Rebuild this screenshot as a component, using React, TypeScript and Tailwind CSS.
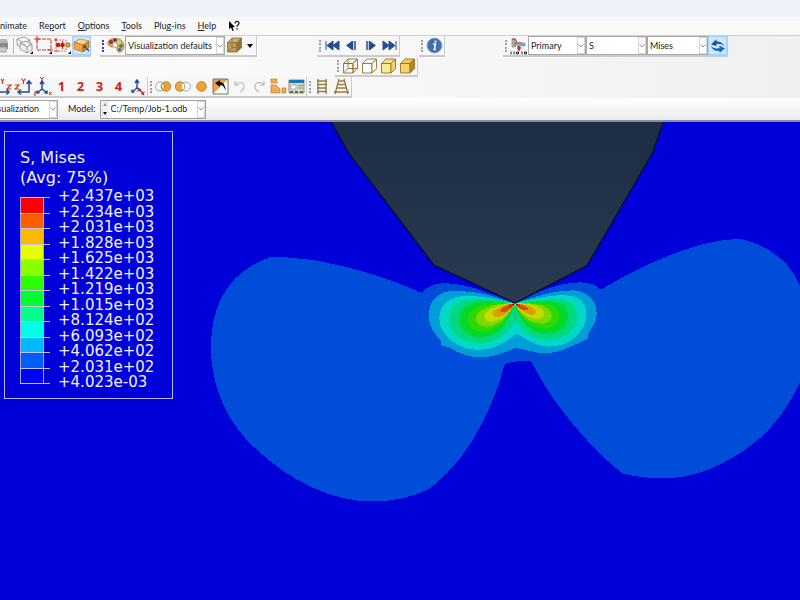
import type { ReactNode } from "react";

const legend = [
  { value: "+2.437e+03", color: "bg-[#ff0000]" },
  { value: "+2.234e+03", color: "bg-[#ff5d00]" },
  { value: "+2.031e+03", color: "bg-[#ffb900]" },
  { value: "+1.828e+03", color: "bg-[#e7ff00]" },
  { value: "+1.625e+03", color: "bg-[#8bff00]" },
  { value: "+1.422e+03", color: "bg-[#2eff00]" },
  { value: "+1.219e+03", color: "bg-[#00ff2e]" },
  { value: "+1.015e+03", color: "bg-[#00ff8b]" },
  { value: "+8.124e+02", color: "bg-[#00ffe7]" },
  { value: "+6.093e+02", color: "bg-[#00b9ff]" },
  { value: "+4.062e+02", color: "bg-[#005dff]" },
  { value: "+2.031e+02", color: "bg-[#0000ff]" },
  { value: "+4.023e-03", color: "" },
];

const menus = [
  ["", "A", "nimate"],
  ["Re", "p", "ort"],
  ["", "O", "ptions"],
  ["", "T", "ools"],
  ["Plu", "g", "-ins"],
  ["", "H", "elp"],
];

function Icon({ children }: { children: ReactNode }) {
  return (
    <svg viewBox="0 0 19 19" className="block size-[19px]" fill="none" aria-hidden="true">
      {children}
    </svg>
  );
}

function Tool({ label, active, children }: { label: string; active?: boolean; children: ReactNode }) {
  return (
    <button
      aria-label={label}
      className={
        active
          ? "h-[19px] w-[19px] shrink-0 bg-[#cce8ff] outline outline-[#99d1ff] -outline-offset-1"
          : "h-[19px] w-[19px] shrink-0 hover:bg-[#e5f3ff]"
      }
    >
      <Icon>{children}</Icon>
    </button>
  );
}

function Grip({ color = "border-[#a0a0a0]" }: { color?: string }) {
  return <span className={`mx-[2px] h-3 shrink-0 border-l-2 border-dotted ${color}`} />;
}

function Group({ className = "", children }: { className?: string; children: ReactNode }) {
  return (
    <div className={`flex h-full shrink-0 items-center border-r border-b-2 border-[#cbcbcb] bg-[#f7f7f7] ${className}`}>
      {children}
    </div>
  );
}

function Chevron() {
  return (
    <span className="pointer-events-none absolute inset-y-0 right-0 flex w-2 items-center justify-center border border-[#d4d4d4] bg-white">
      <svg viewBox="0 0 6 4" className="w-[6px]" fill="none" stroke="#777" strokeWidth=".8">
        <path d="M.5.5 3 3 5.5.5" />
      </svg>
    </span>
  );
}

function Dropdown({ label, value, className }: { label: string; value: string; className: string }) {
  return (
    <div className={`relative h-[19px] shrink-0 border border-[#a8a8a8] bg-white ${className}`}>
      <select aria-label={label} className="block h-full w-full appearance-none bg-transparent pl-[2px] outline-none">
        <option>{value}</option>
      </select>
      <Chevron />
    </div>
  );
}

function Cube({ face, top, side, wire }: { face: string; top: string; side: string; wire?: boolean }) {
  return (
    <g stroke="#94702f" strokeWidth=".9" strokeLinejoin="round">
      <path d="M2.500 6.500h9.500v9.500h-9.500z" fill={face} />
      <path d="m2.500 6.500 4.500-4.500h9.500L12 6.500z" fill={top} />
      <path d="m12 6.500 4.500-4.500v9.500L12 16z" fill={side} />
      {wire && <path d="M7 2v9.500h9.500M7 11.500 2.500 16" />}
    </g>
  );
}

function Digit({ value }: { value: string }) {
  return (
    <button className="h-[19px] w-[19px] shrink-0 text-center font-['Open_Sans',sans-serif] text-[13px] leading-[19px] font-bold text-[#cc2412]">
      {value}
    </button>
  );
}

function MenuBar() {
  return (
    <nav className="-ml-2 flex h-[18px] items-center gap-3 bg-[#f9f9f9] pl-[2px]">
      {menus.map(([before, key, after]) => (
        <button key={after} className="shrink-0">
          {before}
          <span className="underline underline-offset-1">{key}</span>
          {after}
        </button>
      ))}
      <button aria-label="Context help" className="shrink-0">
        <svg viewBox="0 0 12 12" className="block size-3">
          <path d="M1 1v8l2-1.600L4.500 11l1.300-.6L4.500 7.200 7 7z" fill="#000" />
          <path d="M7 3.500c0-3 4-2.700 4-.3C11 4.800 9 4.700 9 6.800M9 8v1.500" fill="none" stroke="#222" strokeWidth="1.300" />
        </svg>
      </button>
    </nav>
  );
}

function Toolbars() {
  return (
    <div className="border-t border-[#cfcfcf] bg-linear-to-r from-[#fbfbfb] via-[#f7f7f7] to-[#f0f0f0]">
      <div className="flex h-[21px]">
        <Group className="-ml-[6px] border-r-0">
          <Tool label="Print">
            <path d="M4 3h9l1 4H4z" fill="#b5b5b5" />
            <path d="M1 7h13v6H1z" fill="#898989" />
            <path d="M5 11h8l-1 5H5z" fill="#c9c9c9" stroke="#8c8c8c" strokeWidth=".7" />
          </Tool>
          <span className="h-4 w-[2px] border-l border-[#bdbdbd]" />
          <Tool label="Pan view">
            <g stroke="#8b8b8b" strokeWidth=".8" strokeLinejoin="round">
              <path d="m2 3 7-2 6 3v6l-5 3-8-4zM2 3l7 4 6-3M9 7v6" />
              <path d="m5 7 6-2 6 3v6l-5 3-7-4zM5 7l7 4 5-3m-5 3v6" fill="#eee" />
            </g>
            <path d="M18 15v3h-3z" fill="#111" />
          </Tool>
          <Tool label="Box zoom">
            <path d="M3 3h14v11H3z" stroke="#ce3a2d" strokeWidth="1" strokeDasharray="4 1" />
            <path d="M3 0v6M0 3h6m8 11h5" stroke="#ce3a2d" strokeWidth="1.200" />
            <path d="M18 15v3h-3z" fill="#111" />
          </Tool>
          <Tool label="Select entities">
            <path d="M3 4h10v11H3z" stroke="#d0564a" strokeWidth=".8" strokeDasharray="2 1" />
            <path d="M3 2v3M1 4h3M1 15h4" stroke="#ce3a2d" strokeWidth="1.200" />
            <circle cx="5" cy="9" r="2.300" fill="#c11d12" />
            <circle cx="9.500" cy="9" r="2.300" fill="#c11d12" />
            <path d="M9.500 5v8" stroke="#c11d12" />
            <circle cx="15" cy="9" r="2.300" fill="#dca03a" stroke="#7d5a1c" strokeWidth=".6" />
            <path d="M18 15v3h-3z" fill="#111" />
          </Tool>
          <Tool label="Perspective" active>
            <path d="m2 6 6-3 9 2-6 4z" fill="#ffd38a" stroke="#a96c1b" strokeWidth=".6" />
            <path d="m2 6 9 3v7l-9-3z" fill="#f0a341" stroke="#a96c1b" strokeWidth=".6" />
            <path d="m11 9 6-4v7l-6 4z" fill="#d88f30" stroke="#955c13" strokeWidth=".6" />
            <path d="m12 10 5 5m-5-5h2m-2 0v2" stroke="#294f90" strokeWidth="1.400" />
          </Tool>
        </Group>
        <Group className="ml-[9px]">
          <Grip color="border-[#3b3bd8]" />
          <Tool label="Color code">
            <path d="M2 6C3 2 11 1 15 4c4 3 4 9 0 12-3 1-4-1-4-3s-3-2-5-2-5-2-4-5z" fill="#cfa878" stroke="#8c6b43" strokeWidth=".6" />
            <circle cx="5" cy="6" r="2" fill="#c51e1e" />
            <circle cx="9" cy="4" r="1.600" fill="#1c2c66" />
            <circle cx="13" cy="6" r="1.900" fill="#e8d64a" />
            <circle cx="15" cy="10" r="1.800" fill="#2c8a3c" />
            <circle cx="9" cy="9" r="2" fill="#fff" />
            <circle cx="13.500" cy="13.500" r="1.500" fill="#3a62b8" />
          </Tool>
          <Dropdown label="Color mapping" value="Visualization defaults" className="w-[100px]" />
          <Tool label="Translucency">
            <Cube face="#b79a63" top="#cbb27f" side="#94743c" wire />
          </Tool>
          <button aria-label="Translucency options" className="flex h-4 w-3 items-center justify-center">
            <svg viewBox="0 0 6 4" className="w-[6px]">
              <path d="M0 0h6L3 4z" fill="#000" />
            </svg>
          </button>
        </Group>
        <Group className="ml-[60px]">
          <Grip />
          <Tool label="First frame">
            <path d="M3 5v9M4 9.500l6-4.500v9zM10 9.500l6-4.500v9z" fill="#234f8e" stroke="#234f8e" strokeWidth="1" />
          </Tool>
          <Tool label="Previous frame">
            <path d="m4 9.500 6-4.500v9z" fill="#234f8e" />
            <path d="M10.500 5v9m2.500-9v9" stroke="#234f8e" strokeWidth="1.500" />
          </Tool>
          <Tool label="Next frame">
            <path d="m15 9.500-6-4.500v9z" fill="#234f8e" />
            <path d="M6 5v9m2.500-9v9" stroke="#234f8e" strokeWidth="1.500" />
          </Tool>
          <Tool label="Last frame">
            <path d="M16 5v9M15 9.500 9 5v9zM9 9.500 3 5v9z" fill="#234f8e" stroke="#234f8e" strokeWidth="1" />
          </Tool>
        </Group>
        <Group className="ml-[19px]">
          <Grip />
          <Tool label="Query information">
            <circle cx="9.500" cy="9.500" r="7.400" fill="#426fb4" stroke="#8c9fc0" strokeWidth="1" />
            <path d="M8 8h2.500l-1.200 5.500h1.700" stroke="#fff" strokeWidth="1.500" />
            <circle cx="10.500" cy="5.500" r="1.100" fill="#fff" />
          </Tool>
        </Group>
        <Group className="ml-[58px]">
          <Grip />
          <Tool label="Field output">
            <path d="M3 3h3v8H3zM6 7h10v3H6z" fill="#a8b8b4" stroke="#777" strokeWidth=".6" />
            <path d="M3 3h3l2 3M6 7h7" stroke="#c9322e" strokeWidth="1.200" />
            <path d="M11 7h5v2h-5z" fill="#65a7d7" />
            <path d="M10 10v5M8 12h4" stroke="#a92b22" strokeWidth="1.600" />
            <path d="M2 15.500v3M5 15.500v3m8-3v3M7.500 16h2v2h-2zM15.500 16h2v2h-2z" stroke="#222" />
          </Tool>
          <Dropdown label="Variable position" value="Primary" className="w-[58px]" />
          <Dropdown label="Output variable" value="S" className="w-[61px]" />
          <Dropdown label="Invariant" value="Mises" className="w-[61px]" />
          <Tool label="Sync" active>
            <path d="M3 8.500 8.500 3v2.500c4 0 6.500 1.500 7.500 4.500-2-2-4.500-2.500-7.500-2V10z" fill="#28489f" />
            <path d="M17 12.500 11.500 17v-2C7 15.500 4 13.500 3 10c2 2 5 3 8.500 2V9.500z" fill="#1b68bd" />
          </Tool>
        </Group>
      </div>
      <div className="flex h-5 pl-[335px]">
        <Group>
          <Grip />
          <Tool label="Wireframe">
            <Cube face="none" top="none" side="none" wire />
          </Tool>
          <Tool label="Hidden line">
            <Cube face="#fbfbfb" top="#fbfbfb" side="#fbfbfb" />
          </Tool>
          <Tool label="Filled">
            <Cube face="#fbeb94" top="#f7e284" side="#efd46d" />
          </Tool>
          <Tool label="Shaded">
            <Cube face="#f8d562" top="#f4c752" side="#bd8420" />
          </Tool>
        </Group>
      </div>
      <div className="flex h-[21px]">
        <Group className="-ml-[5px]">
          <Tool label="Y-Z view">
            <path d="M4 15h10m-2.500-2.500L14 15l-2.500 2.500" stroke="#23499c" strokeWidth="1.500" />
            <path d="m6 2 1.500 2L9 2M7.500 4v3M12 8h4l-4 4h4" stroke="#cc3322" strokeWidth="1.200" />
          </Tool>
          <Tool label="Z-Y view">
            <path d="M4 15h11V4m-2.500 3L15 4l2.500 3M7 12.500 4 15l3 2.500" stroke="#23499c" strokeWidth="1.500" />
            <path d="M7.500 1.500 9.500 4l2-2.500M9.500 4v3M1 8h4l-4 4h4" stroke="#cc3322" strokeWidth="1.200" />
          </Tool>
          <Tool label="Isometric view">
            <path d="M9 12V5M7 7l2-3 2 3m-2 5-5 4m2.500-.2L4 16l.2-2.500M9 12l5 4m0-2.500V16h-2.500" stroke="#23499c" strokeWidth="1.500" />
            <path d="m7 0 2 2 2-2M9 2v2M1 15h2l-2 3h2m13-3 2.500 3m0-3L16 18" stroke="#cc3322" strokeWidth="1" />
          </Tool>
          <Digit value="1" />
          <Digit value="2" />
          <Digit value="3" />
          <Digit value="4" />
          <Tool label="Rotate view">
            <path d="M9 11V4M7 6l2-3 2 3m-2 5-5 4m0-2.500V15h2.500M9 11l4 2" stroke="#23499c" strokeWidth="1.400" />
            <path d="M9 14c3-1 5 0 6 3m-2-.5 2.500 1 .5-3" stroke="#cc3322" strokeWidth="1.300" />
          </Tool>
        </Group>
        <Group>
          <Grip />
          <Tool label="Replace selected">
            <circle cx="6" cy="9.500" r="4.500" stroke="#a8a8a8" />
            <circle cx="12" cy="9.500" r="4.800" fill="#f0a431" stroke="#9a7133" strokeWidth=".7" />
            <path d="M9 6a4.500 4.500 0 0 1 0 7 4.500 4.500 0 0 1 0-7z" fill="#f8d9a0" stroke="#82672f" strokeWidth=".6" />
          </Tool>
          <Tool label="Remove selected">
            <circle cx="13" cy="9.500" r="4.500" stroke="#a8a8a8" />
            <circle cx="7" cy="9.500" r="4.800" fill="#f0a431" stroke="#9a7133" strokeWidth=".7" />
            <path d="M10 6a4.500 4.500 0 0 1 0 7 4.500 4.500 0 0 1 0-7z" fill="#fff" stroke="#999" strokeWidth=".6" />
          </Tool>
          <Tool label="Display all">
            <circle cx="9.500" cy="9.500" r="4.900" fill="#f0a431" stroke="#ad7a2c" strokeWidth=".8" />
          </Tool>
          <Tool label="Toggle selection">
            <path d="M2 2h15v15H2z" fill="#f8fbfc" />
            <path d="M2 17V2h15z" fill="#e9a43d" />
            <path d="M2 2h15v15H2z" stroke="#777" />
            <path d="m4 6 5-3v2c4 0 5 4 6 9-2-4-3-6-6-6v2z" fill="#080808" />
          </Tool>
          <Tool label="Undo">
            <path d="M5 4v4h4M5 8c3-4 9-3 9 1.500 0 3-2 4.500-4 5.500" stroke="#b5b5b5" strokeWidth="1.100" />
          </Tool>
          <Tool label="Redo">
            <path d="M15 4v4h-4m4 0c-3-4-9-3-9 1.500 0 3 2 4.500 4 5.500" stroke="#b5b5b5" strokeWidth="1.100" />
          </Tool>
          <Tool label="Display groups">
            <g fill="#f0ad4d" stroke="#ad833e" strokeWidth=".7">
              <path d="M3 2h6v4H3zM3 8h5l4 4v4H3zM14 11h4v5h-4z" />
            </g>
          </Tool>
          <Tool label="Group manager">
            <path d="M2 3h15v13H2z" fill="#d9d9c6" stroke="#777760" strokeWidth=".8" />
            <path d="M2 3h15v3H2z" fill="#1878be" />
            <path d="M4 8h5v4H4z" fill="#fff" stroke="#888" strokeWidth=".6" />
            <path d="M11 8.500h5M11 11h5" stroke="#777" strokeWidth=".8" />
            <path d="M3 14h3v2H3zM8 14h3v2H8zM13 14h3v2h-3z" fill="#686849" />
          </Tool>
        </Group>
        <Group>
          <Grip />
          <Tool label="Parallel path">
            <path d="M5 2v15m8-15v15" stroke="#76694f" strokeWidth="1.200" />
            <path d="M4 4h10M4 7.500h10M4 11h10M4 14.500h10" stroke="#a07b3c" strokeWidth="1.300" />
          </Tool>
          <Tool label="Perspective path">
            <path d="m7 2-4 15m9-15 4 15" stroke="#76694f" strokeWidth="1.200" />
            <path d="M6 4h7M5 7.500h9M4 11h11M2 15h15" stroke="#a07b3c" strokeWidth="1.300" />
          </Tool>
        </Group>
      </div>
    </div>
  );
}

function ContextBar() {
  return (
    <div className="flex h-6 items-center border-b-2 border-[#8d8d9c] bg-linear-to-b from-white to-[#ebebeb]">
      <Dropdown label="Module" value="Visualization" className="-ml-[14px] w-[72px]" />
      <label htmlFor="model" className="ml-[10px]">
        Model:
      </label>
      <div className="ml-1 flex h-[19px] border border-[#a0a0a0] bg-[#f0f0f0]">
        <button aria-label="Change output database" className="flex w-2 flex-col items-center justify-around">
          <svg viewBox="0 0 4 3" className="w-1">
            <path d="M2 0 4 3H0z" fill="#999" />
          </svg>
          <svg viewBox="0 0 4 3" className="w-1">
            <path d="M0 0h4L2 3z" fill="#111" />
          </svg>
        </button>
        <div className="relative w-24 bg-white">
          <select id="model" className="block h-full w-full appearance-none bg-transparent pl-[2px] outline-none">
            <option>C:/Temp/Job-1.odb</option>
          </select>
          <Chevron />
        </div>
      </div>
    </div>
  );
}

function StressPlot() {
  return (
    <svg
      viewBox="0 122 800 478"
      preserveAspectRatio="xMidYMin slice"
      className="block w-full"
      shapeRendering="crispEdges"
      role="img"
      aria-label="Von Mises stress contour plot"
    >
      <defs>
        <linearGradient id="backdrop" x1="0" y1="0" x2="0" y2="1">
          <stop offset="0" stopColor="#1d2d44" />
          <stop offset="1" stopColor="#293a51" />
        </linearGradient>
      </defs>
      <path
        fill="#004dd9"
        d="M270 257.300 288 257.500 313 260C340 265 380 274 421.700 293 427 286 436 282.500 448 283.300 466 284 485 291 514.700 303.300 540 290 560 282.500 580 282.300 591 282.500 597 286 601 289.700 630 272 665 255 700 245 715 241 730 239 741 239 757 242 776 252 788 266 793 272 797 279 800 286L806 300C812 330 808 360 800 382 790 405 775 425 760 438 735 460 705 473 682 477 662 479.500 640 478 623 473.500 600 457 565 418 545 386 540 377 535 368 531 361.500 522 360.500 510 361.500 504.700 364 500 382 494 400 480 427 470 447 455 468 430 488.700 410 498 392 501.500 372 501.500 330 501 285 480 245 438 222 412 211 380 211 347 211 305 228 272 270 257.300Z"
      />
      <g transform="translate(400 250) scale(.33333)">
        <path
          fill="#009ed9"
          d="M344 160C300 145 250 125 170 122 115 122 87 150 86 195 86 230 105 255 122 270 118 285 130 292 145 290 175 312 210 322 245 322 290 320 320 305 345 294 370 294 400 310 440 310 490 308 530 280 565 265 562 255 566 250 568 246 585 220 590 210 590 190 590 150 560 122 520 121 460 122 400 140 344 160Z"
        />
        <path
          fill="#00d9c8"
          d="M344 160C300 150 250 137 195 138 145 140 118 165 118 205 118 260 175 300 240 300 285 298 320 275 348 252 375 260 400 290 450 290 510 288 560 245 560 190 560 155 535 136 490 135 430 137 390 150 344 160Z"
        />
        <path
          fill="#00d97f"
          d="M344 160C300 152 260 145 220 146 175 148 148 172 148 205 148 250 190 281 243 281 290 279 325 248 347 212 365 245 395 270 445 270 500 268 532 235 532 195 532 165 510 147 470 147 425 148 390 154 344 160Z"
        />
        <path
          fill="#00d92a"
          d="M344 160C310 156 280 153 245 154 205 157 177 180 177 208 177 240 205 262 245 262 290 260 325 225 344 160 360 220 395 252 440 252 480 250 505 228 505 198 505 170 485 154 450 154 415 154 385 157 344 160Z"
        />
        <path
          fill="#2ad900"
          d="M344 160C310 158 285 158 260 162 225 168 203 185 203 207 203 230 222 246 250 246 290 245 325 210 344 160 362 208 395 236 435 236 462 235 478 220 478 198 478 175 460 161 430 160 400 158 375 158 344 160Z"
        />
        <path
          fill="#7fd900"
          d="M344 160C315 159 295 160 275 168 245 176 228 188 228 205 228 221 242 230 262 230 295 229 325 200 344 160 362 200 393 221 425 221 445 220 455 211 455 198 455 179 435 166 410 163 385 159 370 159 344 160Z"
        />
        <path
          fill="#c8d900"
          d="M344 160C320 159 300 165 285 172 265 180 253 188 253 200 253 210 262 215 275 215 300 214 325 195 344 160 362 191 387 207 412 207 424 206 432 200 432 190 432 177 412 167 395 164 375 160 365 160 344 160Z"
        />
        <path
          fill="#d99e00"
          d="M344 160C325 160 310 167 297 174 285 179 277 184 277 191 277 198 283 201 292 201 310 200 330 186 344 160 360 184 382 195 400 195 405 193 408 190 408 184 406 174 390 169 375 165 363 161 355 160 344 160Z"
        />
        <path
          fill="#d94d00"
          d="M344 160C330 161 318 167 308 174 300 178 299 185 307 186 322 187 336 176 344 160 354 173 365 181 380 181 386 180 386 176 381 172 370 166 356 161 344 160Z"
        />
        <path fill="#d90000" d="M344 160C334 162 329 166 326 171 334 171 340 167 344 160 348 166 354 170 361 171 358 165 352 161 344 160Z" />
      </g>
      <path
        d="M331 121 348 152 434 265 515 303 587 265.500 653 152 663.500 121Z"
        fill="url(#backdrop)"
        stroke="#0b0f1c"
        strokeWidth="1.200"
        shapeRendering="auto"
      />
    </svg>
  );
}

function Legend() {
  return (
    <aside className="absolute top-[9px] left-1 w-[169px] border border-[#b9b9f2] px-[15px] pt-4 pb-2 font-['DejaVu_Sans',sans-serif] text-[15px] text-[#f2f2ff]">
      <div className="text-base leading-5">
        <p>S, Mises</p>
        <p>(Avg: 75%)</p>
      </div>
      <div className="flex gap-2">
        <ul className="mt-[9px] flex h-[187px] w-[30px] flex-col">
          {legend.slice(0, -1).map(({ value, color }) => (
            <li key={value} className="flex-1 border-t border-[#c4c4e8] last:border-b">
              <div className={`h-full w-6 border-x border-[#a9a9d0] ${color}`} />
            </li>
          ))}
        </ul>
        <ul className="mt-px flex h-[201px] flex-col justify-between leading-[15px]">
          {legend.map(({ value }) => (
            <li key={value}>{value}</li>
          ))}
        </ul>
      </div>
    </aside>
  );
}

export default function App() {
  return (
    <div className="flex min-h-screen flex-col overflow-hidden bg-[#0000d9] font-['Lato',sans-serif] text-[9px] leading-4 text-[#222]">
      <header className="bg-[#f8f8f8]">
        <div className="h-[17px] bg-[#eef3fa]" />
        <MenuBar />
        <Toolbars />
        <ContextBar />
      </header>
      <main className="relative flex-1 bg-[#0000d9]">
        <StressPlot />
        <Legend />
      </main>
    </div>
  );
}
